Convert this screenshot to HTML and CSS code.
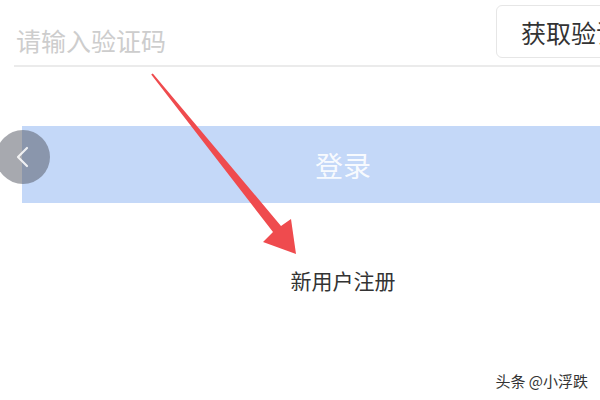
FILE: index.html
```html
<!DOCTYPE html>
<html lang="zh-CN">
<head>
  <meta charset="UTF-8">
  <meta name="viewport" content="width=device-width, initial-scale=1.0">
  <title>登录</title>
  <link rel="stylesheet" href="styles.css">
</head>
<body>
  <div class="screen">
    <div class="code-row">
      <div class="code-input">请输入验证码</div>
      <button class="code-btn">获取验证码</button>
    </div>
    <button class="login-btn">登录</button>
    <div class="register">新用户注册</div>
  </div>

  <!-- floating back button -->
  <div class="back">
    <svg width="54" height="54" viewBox="0 0 54 54">
      <polyline points="31,18 22,27 31,36" fill="none" stroke="rgba(255,255,255,0.85)" stroke-width="2.2" stroke-linecap="round" stroke-linejoin="round"/>
    </svg>
  </div>

  <!-- red annotation arrow -->
  <svg class="arrow" width="600" height="400" viewBox="0 0 600 400">
    <polygon points="152.8,73.4 281,226 291,219 296,254 263,242 273,232 151.2,74.6" fill="#ef4b4e"/>
  </svg>

  <div class="watermark">头条 @小浮跌</div>
</body>
</html>
```

FILE: styles.css
```css
html, body {
  margin: 0;
  padding: 0;
  height: 100%;
  overflow: hidden;
  background-color: #ffffff;
  font-family: "Noto Sans CJK SC", "Noto Sans", sans-serif;
}
.screen {
  width: 686px;
}
.code-row {
  display: flex;
  align-items: flex-start;
  margin: 0 14px;
  height: 65px;
  border-bottom: 2px solid #ebebeb;
  overflow: hidden;
}
.code-input {
  width: 480px;
  padding-left: 2px;
  flex-shrink: 0;
  font-size: 25px;
  line-height: 30px;
  margin-top: 25px;
  color: #cdcdcd;
}
.code-btn {
  flex-shrink: 0;
  margin-top: 5px;
  height: 53px;
  padding: 0 24px;
  font-family: inherit;
  font-size: 25px;
  color: #333333;
  background-color: #ffffff;
  border: 1px solid #e6e6e6;
  border-radius: 6px;
}
.login-btn {
  display: block;
  width: calc(100% - 44px);
  margin: 59px 22px 0;
  height: 77px;
  border: none;
  font-family: inherit;
  font-size: 28px;
  color: rgba(255, 255, 255, 0.9);
  background-color: #c4d8f8;
}
.register {
  margin-top: 62px;
  text-align: center;
  font-size: 21px;
  line-height: 30px;
  color: #333333;
}
.back {
  position: absolute;
  left: -4px;
  top: 130px;
  width: 54px;
  height: 54px;
  border-radius: 50%;
  background-color: rgba(80, 84, 96, 0.5);
}
.arrow {
  position: absolute;
  left: 0;
  top: 0;
}
.watermark {
  position: absolute;
  right: 12px;
  top: 370px;
  font-size: 15px;
  color: #333333;
}
```
